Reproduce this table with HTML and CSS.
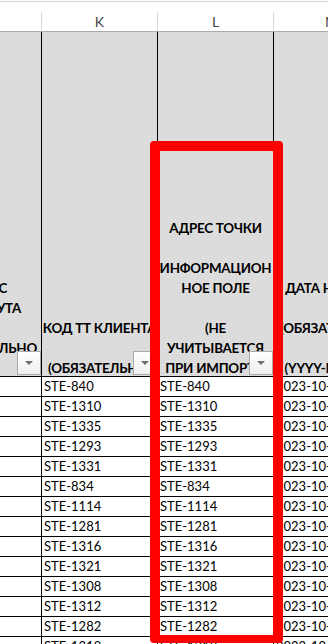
FILE: index.html
```html
<!DOCTYPE html>
<html lang="ru">
<head>
<meta charset="utf-8">
<title>Лист</title>
<link rel="stylesheet" href="styles.css">
</head>
<body>
<div class="sheet">
  <div class="formula-edge"></div>
  <div class="colheads">
    <div class="ch"></div>
    <div class="ch">K</div>
    <div class="ch">L</div>
    <div class="ch">M</div>
  </div>

  <div class="row head">
    <div class="hc col-j">
      <div class="htext jtext">
        <span class="jl jl1">КЛАСС</span>
        <span class="jl jl2">МАРШРУТА</span>
        <span class="jl">&nbsp;</span>
        <span class="jl jl4">(ОБЯЗАТЕЛЬНО</span>
        <span class="jl">&nbsp;</span>
      </div>
      <span class="filter"></span>
    </div>
    <div class="hc">
      <div class="htext">КОД ТТ КЛИЕНТА<br><br>(ОБЯЗАТЕЛЬНО)</div>
      <span class="filter"></span>
    </div>
    <div class="hc">
      <div class="htext">АДРЕС ТОЧКИ<br><br>ИНФОРМАЦИОН<br>НОЕ ПОЛЕ<br><br>(НЕ<br>УЧИТЫВАЕТСЯ<br>ПРИ ИМПОРТЕ)</div>
      <span class="filter"></span>
    </div>
    <div class="hc">
      <div class="htext">ДАТА НАЧАЛА<br><br>(ОБЯЗАТЕЛЬНО)<br><br>(YYYY-MM-DD)</div>
    </div>
  </div>

  <div class="row"><div class="c"></div><div class="c">STE-840</div><div class="c">STE-840</div><div class="c">2023-10-02</div></div>
  <div class="row"><div class="c"></div><div class="c">STE-1310</div><div class="c">STE-1310</div><div class="c">2023-10-02</div></div>
  <div class="row"><div class="c"></div><div class="c">STE-1335</div><div class="c">STE-1335</div><div class="c">2023-10-02</div></div>
  <div class="row"><div class="c"></div><div class="c">STE-1293</div><div class="c">STE-1293</div><div class="c">2023-10-02</div></div>
  <div class="row"><div class="c"></div><div class="c">STE-1331</div><div class="c">STE-1331</div><div class="c">2023-10-02</div></div>
  <div class="row"><div class="c"></div><div class="c">STE-834</div><div class="c">STE-834</div><div class="c">2023-10-02</div></div>
  <div class="row"><div class="c"></div><div class="c">STE-1114</div><div class="c">STE-1114</div><div class="c">2023-10-02</div></div>
  <div class="row"><div class="c"></div><div class="c">STE-1281</div><div class="c">STE-1281</div><div class="c">2023-10-02</div></div>
  <div class="row"><div class="c"></div><div class="c">STE-1316</div><div class="c">STE-1316</div><div class="c">2023-10-02</div></div>
  <div class="row"><div class="c"></div><div class="c">STE-1321</div><div class="c">STE-1321</div><div class="c">2023-10-02</div></div>
  <div class="row"><div class="c"></div><div class="c">STE-1308</div><div class="c">STE-1308</div><div class="c">2023-10-02</div></div>
  <div class="row"><div class="c"></div><div class="c">STE-1312</div><div class="c">STE-1312</div><div class="c">2023-10-02</div></div>
  <div class="row"><div class="c"></div><div class="c">STE-1282</div><div class="c">STE-1282</div><div class="c">2023-10-02</div></div>
  <div class="row"><div class="c"></div><div class="c">STE-1318</div><div class="c">STE-1318</div><div class="c">2023-10-02</div></div>

  <div class="mark"></div>
</div>
</body>
</html>
```

FILE: styles.css
```css
html, body {
  margin: 0;
  padding: 0;
  background: #ffffff;
}
body {
  width: 328px;
  height: 644px;
  overflow: hidden;
  font-family: Lato, "Open Sans", sans-serif;
  color: #000;
}
.sheet {
  position: relative;
  width: 390px;
}
.formula-edge {
  height: 1px;
  border-bottom: 1px solid #d2d2d2;
  margin-bottom: 10px;
}
.colheads,
.row {
  display: grid;
  grid-template-columns: 42px 116px 116px 116px;
}
.colheads {
  height: 19px;
  border-bottom: 1px solid #ababab;
}
.ch {
  box-sizing: border-box;
  border-right: 1px solid #d8d8d8;
  text-align: center;
  font-size: 14px;
  line-height: 19px;
  color: #444;
}
.row {
  height: 20px;
  box-sizing: border-box;
  border-bottom: 1px solid #000;
}
.row.head {
  height: 345px;
  background: #dcdcdc;
}
.hc {
  position: relative;
  box-sizing: border-box;
  border-right: 1px solid #000;
  overflow: hidden;
  display: flex;
  flex-direction: column;
  justify-content: flex-end;
}
.htext {
  font-weight: 700;
  font-size: 13.4px;
  letter-spacing: -0.25px;
  line-height: 20px;
  text-align: center;
  white-space: nowrap;
  margin-bottom: -2px;
  margin-left: -20px;
  margin-right: -20px;
}
.jtext {
  margin-left: -120px;
  margin-right: 0;
  display: flex;
  flex-direction: column;
  align-items: flex-end;
}
.jl {
  display: block;
}
.jl1 { padding-right: 34px; }
.jl2 { padding-right: 20px; }
.jl4 { padding-right: 4px; }
.filter {
  position: absolute;
  right: 0;
  bottom: 1px;
  width: 24px;
  height: 24px;
  box-sizing: border-box;
  border: 1px solid #ababab;
  background: linear-gradient(#ffffff, #f0f0f0);
  display: flex;
  align-items: center;
  justify-content: center;
}
.filter::after {
  content: "";
  width: 0;
  height: 0;
  border-left: 4px solid transparent;
  border-right: 4px solid transparent;
  border-top: 4px solid #6e6e6e;
}
.c {
  box-sizing: border-box;
  border-right: 1px solid #000;
  padding-left: 2px;
  font-size: 13px;
  line-height: 19px;
  white-space: nowrap;
  overflow: hidden;
}
.mark {
  position: absolute;
  left: 150px;
  top: 141px;
  width: 133px;
  height: 502px;
  box-sizing: border-box;
  border: 10px solid #ff0000;
  border-bottom-width: 8px;
  border-radius: 4px;
}
```
